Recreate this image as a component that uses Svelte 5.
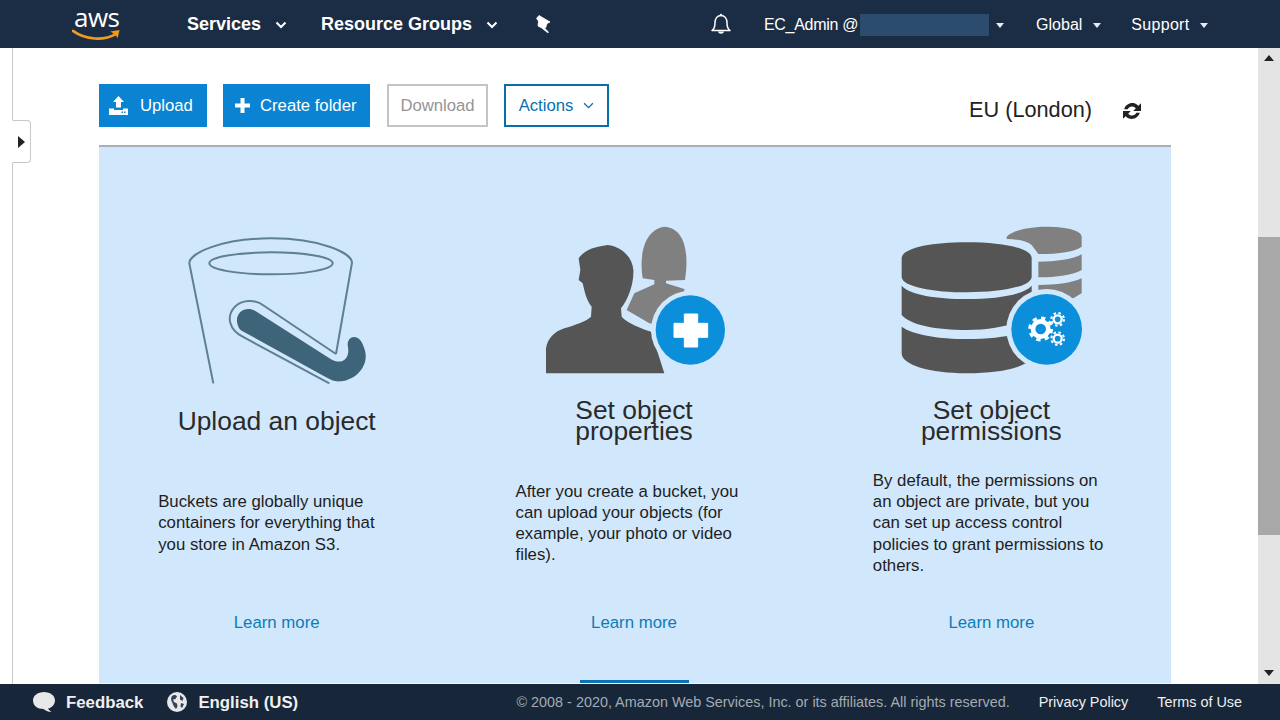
<script>
  const cards = [
    {
      title: ["Upload an object"],
      text: ["Buckets are globally unique", "containers for everything that", "you store in Amazon S3."],
      icon: "bucket",
    },
    {
      title: ["Set object", "properties"],
      text: ["After you create a bucket, you", "can upload your objects (for", "example, your photo or video", "files)."],
      icon: "people",
    },
    {
      title: ["Set object", "permissions"],
      text: ["By default, the permissions on", "an object are private, but you", "can set up access control", "policies to grant permissions to", "others."],
      icon: "db",
    },
  ];
  const bg = "#d1e7fb";
</script>

<div class="page">
  <header class="topbar">
    <div class="logo">
      <span class="aws">aws</span>
      <svg class="smile" viewBox="0 0 50 13" width="48" height="12.500">
        <path d="M1 2C14 11.500 33 12.500 46 5" fill="none" stroke="#f29a1f" stroke-width="2.800" stroke-linecap="round" />
        <path d="M40 2.500L49.500 1L47.500 9.500C46.500 7 44 5 40 2.500Z" fill="#f29a1f" />
      </svg>
    </div>
    <span class="nav services">Services</span>
    <svg class="chev" viewBox="0 0 12 8" width="12" height="8"><path d="M1.500 1.500L6 6L10.500 1.500" fill="none" stroke="#fff" stroke-width="2" /></svg>
    <span class="nav groups">Resource Groups</span>
    <svg class="chev" viewBox="0 0 12 8" width="12" height="8"><path d="M1.500 1.500L6 6L10.500 1.500" fill="none" stroke="#fff" stroke-width="2" /></svg>
    <svg class="pin" viewBox="0 0 18 18" width="18" height="18">
      <path d="M5 0.500L16 7L13 8.500L11.500 13L9 11.800L14.500 17L13.800 17.800L7.500 12.800L4 11L4.500 6L2.500 3.500Z" fill="#fff" stroke="#fff" stroke-width="0.800" stroke-linejoin="round" />
    </svg>
    <div class="spacer"></div>
    <svg class="bell" viewBox="0 0 22 22" width="22" height="22">
      <path d="M2 17.500C4 16 5 14 5 10C5 5.500 7.500 2.500 11 2.500C14.500 2.500 17 5.500 17 10C17 14 18 16 20 17.500Z" fill="none" stroke="#fff" stroke-width="1.500" stroke-linejoin="round" />
      <path d="M8 18.500C8.500 21.500 13.500 21.500 14 18.500Z" fill="#fff" />
      <circle cx="11" cy="2" r="1.200" fill="#fff" />
    </svg>
    <span class="nav-sm user">EC_Admin @</span>
    <span class="redact"></span>
    <span class="caret first"></span>
    <span class="nav-sm global">Global</span>
    <span class="caret"></span>
    <span class="nav-sm support">Support</span>
    <span class="caret"></span>
  </header>

  <div class="middle">
    <div class="content">
      <button class="side-tab" aria-label="Open navigation"><span class="tri"></span></button>
      <main class="column">
        <div class="toolbar">
          <button class="btn primary">
            <svg viewBox="0 0 19 19" width="19" height="19">
              <path d="M9.500 0L15 6H12V11.500H7V6H4Z" fill="#fff" />
              <path d="M0 12.500H5V14H14V12.500H19V19H0Z" fill="#fff" />
              <path d="M12.500 15.500H14V17H12.500ZM15 15.500H16.500V17H15Z" fill="#0a84d2" />
            </svg>
            <span class="gap-l">Upload</span>
          </button>
          <button class="btn primary create">
            <svg viewBox="0 0 15 15" width="15" height="15">
              <path d="M5.500 0H9.500V5.500H15V9.500H9.500V15H5.500V9.500H0V5.500H5.500Z" fill="#fff" />
            </svg>
            <span>Create folder</span>
          </button>
          <button class="btn disabled">Download</button>
          <button class="btn outline">
            <span>Actions</span>
            <svg viewBox="0 0 12 8" width="11" height="7"><path d="M1 1.500L6 6.500L11 1.500" fill="none" stroke="#0a6fb0" stroke-width="1.500" /></svg>
          </button>
          <div class="spacer"></div>
          <span class="region">EU (London)</span>
          <svg class="refresh" viewBox="1.500 1.500 15 15" width="18" height="18">
            <path d="M2.500 7.500C3.500 3.500 8 1.500 11.500 2.800C12.800 3.300 13.500 4 14.300 4.700L16.500 2.500V9H10L12.200 6.800C10 4.500 6.800 4.800 5.400 7.500Z" fill="#222" />
            <path d="M15.500 10.500C14.500 14.500 10 16.500 6.500 15.200C5.200 14.700 4.500 14 3.700 13.300L1.500 15.500V9H8L5.800 11.200C8 13.500 11.200 13.200 12.600 10.500Z" fill="#222" />
          </svg>
        </div>

        <section class="panel">
          {#each cards as card}
            <article class="card">
              <div class="icon">
                {#if card.icon === "bucket"}
                  <svg viewBox="0 -15 642 525" width="214" height="175">
                    <g fill="none" stroke="#5f7f92" stroke-width="6">
                      <path d="M127 490L55 130C55 100 150 55 300 55C450 55 543 100 543 128L495 402" />
                      <ellipse cx="300" cy="130" rx="185" ry="33" />
                      <path d="M475 490L215 350C175 330 165 290 190 262C210 240 250 235 280 258L495 402" />
                    </g>
                    <path d="M198 305C195 275 225 258 252 272L480 418C510 435 540 420 530 375C530 345 565 340 578 380C600 430 560 478 510 484C490 486 480 480 465 472L212 332C205 328 200 318 198 305Z" fill="#3e6479" />
                  </svg>
                {:else if card.icon === "people"}
                  <svg viewBox="0 0 624 510" width="208" height="170">
                    <path d="M335 190C325 130 335 45 400 35C470 40 472 130 462 195L405 197L405 205L460 222L450 340L355 325L287 285L310 235L370 208L370 195Z" fill="#808080" />
                    <path d="M45 475L45 400C50 370 70 350 100 340C130 330 165 320 180 305L182 275C165 255 160 225 155 205L143 195L148 165L143 130C160 105 190 95 230 90C275 95 305 130 307 165C309 200 295 250 270 280L272 305C290 325 330 340 360 350L400 475Z" fill="#555" stroke={bg} stroke-width="12" paint-order="stroke" />
                    <circle cx="478" cy="345" r="118" fill={bg} />
                    <circle cx="478" cy="345" r="104" fill="#0b8fdb" />
                    <path d="M460 297H500V325H530V367H500V396H460V367H429V325H460Z" fill="#fff" stroke="#fff" stroke-width="3" stroke-linejoin="round" />
                  </svg>
                {:else}
                  <svg viewBox="0 0 612 510" width="204" height="170">
                    <g fill="#808080">
                      <path d="M350 65C370 45 420 35 470 35C525 35 575 45 575 65V95C555 110 510 117 445 117L425 90C410 78 380 72 350 72Z" />
                      <path d="M445 140C500 140 550 133 575 118V165C550 180 500 187 445 187Z" />
                      <path d="M445 210C500 210 550 203 575 190V235L550 250L445 250Z" />
                    </g>
                    <g fill="#555" stroke={bg} stroke-width="8" paint-order="stroke">
                      <path d="M35 130C35 100 120 82 230 82C340 82 425 100 425 130V185C425 215 330 232 230 232C130 232 35 215 35 185Z" />
                      <path d="M35 212C60 240 140 252 230 252C320 252 400 240 425 212V290C400 325 320 345 230 345C140 345 60 330 35 300Z" />
                      <path d="M35 335C70 360 150 372 230 372C320 372 400 360 425 335V430C400 460 330 475 230 475C120 475 35 450 35 415Z" />
                    </g>
                    <circle cx="470" cy="343" r="121" fill={bg} />
                    <circle cx="470" cy="343" r="106" fill="#0b8fdb" />
                    <g fill="none" stroke="#fff">
                      <circle cx="452" cy="342" r="23" stroke-width="14" />
                      <circle cx="452" cy="342" r="33" stroke-width="9" stroke-dasharray="13 12.920" />
                      <circle cx="503" cy="313" r="12" stroke-width="7" />
                      <circle cx="503" cy="313" r="19" stroke-width="6" stroke-dasharray="7.500 7.420" />
                      <circle cx="503" cy="371" r="12" stroke-width="7" />
                      <circle cx="503" cy="371" r="19" stroke-width="6" stroke-dasharray="7.500 7.420" />
                    </g>
                  </svg>
                {/if}
              </div>
              <h2 class="title">
                {#each card.title as line}<span>{line}</span>{/each}
              </h2>
              <p class="desc">
                {#each card.text as line}<span>{line}</span>{/each}
              </p>
              <a class="more" href="#more">Learn more</a>
            </article>
          {/each}
          <span class="indicator"></span>
        </section>
      </main>
    </div>

    <aside class="scrollbar">
      <span class="arrow up"></span>
      <div class="thumb"></div>
      <span class="arrow down"></span>
    </aside>
  </div>

  <footer class="footer">
    <svg class="fb-icon" viewBox="0 0 22 20" width="22" height="20">
      <path d="M11 0C17 0 22 3.500 22 8.500C22 13 18 16 15 16.500C16 18 17 19 18.500 20C15 20 12 18.500 10.500 17C4.500 17 0 13.500 0 8.500C0 3.500 5 0 11 0Z" fill="#e8e8e8" />
    </svg>
    <span class="foot-b feedback">Feedback</span>
    <svg class="globe" viewBox="0 0 20 20" width="20" height="20">
      <circle cx="10" cy="10" r="10" fill="#e8e8e8" />
      <path d="M5 4C7 2.500 9 3 10 4.500L8.500 7L6 7.500L7 10L10 11.500L10.500 14.500L9 17C7 15 6 13 5.500 11C4 9 3.500 6 5 4Z" fill="#32435a" />
      <path d="M13 3L16.500 6L15.500 9L13 7.500Z" fill="#32435a" />
      <path d="M14 11L17 12L15 16L13.500 14.500Z" fill="#32435a" />
    </svg>
    <span class="foot-b">English (US)</span>
    <div class="spacer"></div>
    <span class="copy">© 2008 - 2020, Amazon Web Services, Inc. or its affiliates. All rights reserved.</span>
    <span class="foot-link">Privacy Policy</span>
    <span class="foot-link">Terms of Use</span>
  </footer>
</div>

<style>
  :global(body) {
    margin: 0;
    background: #fff;
    font-family: "Liberation Sans", Arial, sans-serif;
  }

  .page {
    width: 1280px;
    height: 720px;
    display: flex;
    flex-direction: column;
    overflow: hidden;
  }

  .spacer {
    flex: 1;
  }

  /* top bar */
  .topbar {
    height: 48px;
    flex: none;
    display: flex;
    align-items: center;
    padding: 0 72px 0 71px;
    box-sizing: border-box;
    background: #1b2d45;
    color: #fff;
  }

  .logo {
    width: 52px;
    display: flex;
    flex-direction: column;
    align-items: flex-start;
    margin-bottom: 4px;
  }

  .aws {
    font-family: "Open Sans", sans-serif;
    font-size: 26px;
    line-height: 30px;
    letter-spacing: -0.5px;
    margin-left: 3px;
  }

  .smile {
    display: block;
    margin-top: -3px;
    margin-left: 1px;
  }

  .nav {
    font-size: 18px;
    font-weight: 700;
  }

  .services {
    margin-left: 64px;
  }

  .groups {
    margin-left: 34px;
  }

  .chev {
    margin-left: 14px;
    margin-top: 2px;
  }

  .pin {
    margin-left: 36px;
    margin-bottom: 1px;
  }

  .nav-sm {
    font-size: 16px;
    margin-top: 2px;
  }

  .bell {
    margin-right: 32px;
  }

  .user {
    letter-spacing: -0.300px;
  }

  .redact {
    width: 129px;
    height: 22px;
    margin-left: 2px;
    margin-top: 2px;
    background: #2c4c6e;
  }

  .caret {
    width: 0;
    height: 0;
    margin-left: 10.500px;
    margin-top: 2px;
    border-left: 4.500px solid transparent;
    border-right: 4.500px solid transparent;
    border-top: 5px solid #e8edf2;
  }

  .first {
    margin-left: 6.500px;
  }

  .global {
    margin-left: 32.500px;
  }

  .support {
    margin-left: 30.500px;
    letter-spacing: 0.300px;
  }

  /* content */
  .middle {
    flex: 1;
    min-height: 0;
    display: flex;
  }

  .content {
    flex: 1;
    position: relative;
    margin-left: 12px;
    border-left: 1px solid #c8c8c8;
    padding-left: 86px;
    padding-right: 87px;
  }

  .side-tab {
    position: absolute;
    left: -1px;
    top: 72px;
    width: 19px;
    height: 43px;
    padding: 0;
    background: #fff;
    border: 1px solid #c8c8c8;
    border-left-color: #fff;
    border-radius: 0 4px 4px 0;
    display: flex;
    align-items: center;
    justify-content: center;
  }

  .tri {
    width: 0;
    height: 0;
    border-top: 6px solid transparent;
    border-bottom: 6px solid transparent;
    border-left: 7px solid #222;
  }

  .column {
    height: 100%;
    display: flex;
    flex-direction: column;
  }

  .toolbar {
    height: 99px;
    flex: none;
    box-sizing: border-box;
    padding: 36px 30px 18px 0;
    display: flex;
    align-items: flex-start;
    border-bottom: 2px solid #a9afb5;
  }

  .btn {
    height: 43px;
    box-sizing: border-box;
    display: flex;
    align-items: center;
    font-family: inherit;
    font-size: 16.700px;
    padding: 0;
    border: 0;
    border-radius: 0;
  }

  .primary {
    width: 108px;
    background: #0a84d2;
    color: #fff;
    padding-left: 10px;
  }

  .gap-l {
    margin-left: 12px;
  }

  .create {
    width: 147px;
    margin-left: 16px;
    padding-left: 12px;
    gap: 10px;
  }

  .disabled {
    width: 101px;
    margin-left: 17px;
    justify-content: center;
    background: #fff;
    color: #949494;
    border: 2px solid #c4c4c4;
  }

  .outline {
    width: 105px;
    margin-left: 16px;
    justify-content: center;
    gap: 10px;
    background: #fff;
    color: #0a6fb0;
    border: 2px solid #0a6fa8;
  }

  .region {
    font-size: 21.700px;
    color: #222;
    margin-top: 13px;
  }

  .refresh {
    margin-left: 31px;
    margin-top: 18px;
  }

  /* panel */
  .panel {
    flex: 1;
    min-height: 0;
    position: relative;
    display: grid;
    grid-template-columns: repeat(3, 1fr);
    background: #d1e7fb;
    border-bottom: 1px solid #eef6fd;
  }

  .card {
    display: flex;
    flex-direction: column;
    padding-top: 68px;
    align-items: center;
  }

  .icon {
    height: 180px;
    flex: none;
  }

  .icon svg {
    display: block;
  }

  .title {
    height: 52px;
    margin: 0 0 0 -2px;
    display: flex;
    flex-direction: column;
    justify-content: center;
    align-items: center;
    font-size: 26.400px;
    font-weight: 400;
    line-height: 21px;
    color: #2a2a2a;
  }

  .desc {
    width: 238px;
    margin: 21px 0 0 -1px;
    height: 110px;
    display: flex;
    flex-direction: column;
    justify-content: center;
    font-size: 16.800px;
    line-height: 21.200px;
    color: #1e1e1e;
    white-space: nowrap;
  }

  .more {
    margin: 34px 0 0 -2px;
    font-size: 16.800px;
    line-height: 21px;
    color: #0a7db8;
    text-decoration: none;
  }

  .indicator {
    position: absolute;
    left: 481px;
    bottom: 0;
    width: 109px;
    height: 3px;
    background: #0b72b5;
  }

  /* scrollbar */
  .scrollbar {
    width: 22px;
    flex: none;
    position: relative;
    background: #e4e4e4;
  }

  .thumb {
    position: absolute;
    top: 189px;
    left: 0;
    right: 0;
    height: 298px;
    background: #a8a8a8;
  }

  .arrow {
    position: absolute;
    left: 6px;
    width: 0;
    height: 0;
    border-left: 5px solid transparent;
    border-right: 5px solid transparent;
  }

  .up {
    top: 7px;
    border-bottom: 6px solid #222;
  }

  .down {
    bottom: 8px;
    border-top: 6px solid #222;
  }

  /* footer */
  .footer {
    height: 36px;
    flex: none;
    display: flex;
    align-items: center;
    box-sizing: border-box;
    padding: 0 38px 0 33px;
    background: #172638;
    color: #f0f0f0;
  }

  .foot-b {
    font-size: 16.800px;
    font-weight: 700;
    margin-left: 11px;
    margin-top: 1px;
  }

  .feedback {
    margin-right: 24px;
  }

  .copy {
    font-size: 14.400px;
    color: #a4abb4;
  }

  .foot-link {
    font-size: 14.400px;
    margin-left: 29px;
  }
</style>
